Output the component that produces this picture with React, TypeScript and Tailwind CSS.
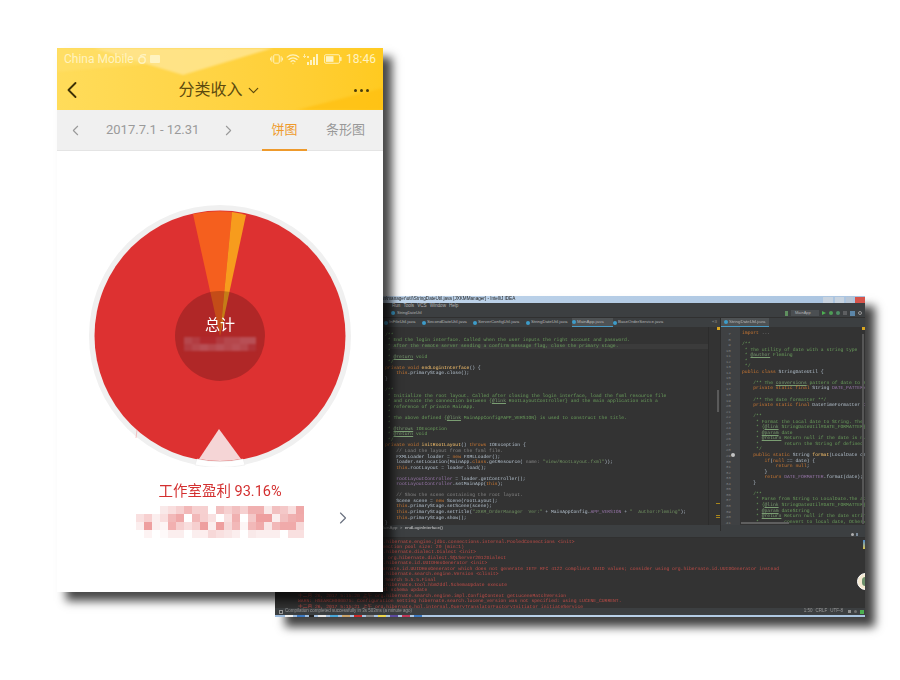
import { ChevronDown, ChevronLeft, ChevronRight, Wifi } from "lucide-react";

const sans = "font-['Roboto','Noto_Sans_CJK_SC',sans-serif]";

// syntax colours
const C = "text-[#6a9f5c]";
const D = "text-[#7a9d72] underline";
const K = "text-[#cc7832]";
const P = "text-[#b3c0cd]";
const M = "text-[#ffc66d]";
const F = "text-[#9876aa]";
const S = "text-[#6f9060]";
const G = "text-[#858585]";

type Line = [string, string][];

const leftCode: Line[] = [
  [[C, "/**"]],
  [[C, " * End the login interface. Called when the user inputs the right account and password."]],
  [[C, " * After the remote server sending a confirm message flag, close the primary stage."]],
  [[C, " *"]],
  [[C, " * "], [D, "@return"], [C, " void"]],
  [[C, " */"]],
  [[K, "private void "], [M, "endLoginInterface"], [P, "() {"]],
  [[K, "    this"], [P, ".primaryStage.close();"]],
  [[P, "}"]],
  [],
  [[C, "/**"]],
  [[C, " * Initialize the root layout. Called after closing the login interface, load the fxml resource file"]],
  [[C, " * and create the connection between {"], [D, "@link"], [C, " RootLayoutController} and the main application with a"]],
  [[C, " * reference of private MainApp."]],
  [[C, " *"]],
  [[C, " * The above defined {"], [D, "@link"], [C, " MainAppConfig#APP_VERSION} is used to construct the title."]],
  [[C, " *"]],
  [[C, " * "], [D, "@throws"], [C, " IOException"]],
  [[C, " * "], [D, "@return"], [C, " void"]],
  [[C, " */"]],
  [[K, "private void "], [M, "initRootLayout"], [P, "() "], [K, "throws "], [P, "IOException {"]],
  [[G, "    // Load the layout from the fxml file."]],
  [[P, "    FXMLLoader loader = "], [K, "new "], [P, "FXMLLoader();"]],
  [[P, "    loader.setLocation(MainApp."], [K, "class"], [P, ".getResource( "], [G, "name: "], [S, "\"view/RootLayout.fxml\""], [P, "));"]],
  [[K, "    this"], [P, ".rootLayout = loader.load();"]],
  [],
  [[F, "    rootLayoutController"], [P, " = loader.getController();"]],
  [[F, "    rootLayoutController"], [P, ".setMainApp("], [K, "this"], [P, ");"]],
  [],
  [[G, "    // Show the scene containing the root layout."]],
  [[P, "    Scene scene = "], [K, "new "], [P, "Scene(rootLayout);"]],
  [[K, "    this"], [P, ".primaryStage.setScene(scene);"]],
  [[K, "    this"], [P, ".primaryStage.setTitle("], [S, "\"JXKM_OrderManager  Ver:\""], [P, " + MainAppConfig."], [F, "APP_VERSION"], [P, " + "], [S, "\"  Author:Fleming\""], [P, ");"]],
  [[K, "    this"], [P, ".primaryStage.show();"]],
  [[P, "}"]],
];

const rightCode: Line[] = [
  [[K, "import "], [G, "..."]],
  [],
  [[C, "/**"]],
  [[C, " * The utility of date with a string type"]],
  [[C, " * "], [D, "@author"], [C, " Fleming"]],
  [[C, " *"]],
  [[C, " */"]],
  [[K, "public class "], [P, "StringDateUtil {"]],
  [],
  [[C, "    /** The "], [D, "conversions"], [C, " pattern of date to st"]],
  [[K, "    private static final "], [P, "String "], [F, "DATE_PATTERN"]],
  [],
  [[C, "    /** The date formatter **/"]],
  [[K, "    private static final "], [P, "DateTimeFormatter "], [F, "DA"]],
  [],
  [[C, "    /**"]],
  [[C, "     * Format the Local date to String. The "], [D, "p"]],
  [[C, "     * {"], [D, "@link"], [C, " StringDateUtil#DATE_FORMATTER}."]],
  [[C, "     * "], [D, "@param"], [C, " date"]],
  [[C, "     * "], [D, "@return"], [C, " Return null if the date is nul"]],
  [[C, "     *         return the String of defined"]],
  [[C, "     */"]],
  [[K, "    public static "], [P, "String "], [M, "format"], [P, "(LocalDate da"]],
  [[K, "        if"], [P, "("], [K, "null"], [P, " == date) {"]],
  [[K, "            return null"], [P, ";"]],
  [[P, "        }"]],
  [[K, "        return "], [F, "DATE_FORMATTER"], [P, ".format(date);"]],
  [[P, "    }"]],
  [],
  [[C, "    /**"]],
  [[C, "     * Parse from String to LocalDate.The abo"]],
  [[C, "     * {"], [D, "@link"], [C, " StringDateUtil#DATE_FORMATTER}."]],
  [[C, "     * "], [D, "@param"], [C, " dateString"]],
  [[C, "     * "], [D, "@return"], [C, " Return null if the date string"]],
  [[C, "     *         convert to local date, Otherw"]],
];

const consoleLines = [
  "十二月 26, 2017 5:15:19 上午 org.hibernate.engine.jdbc.connections.internal.PooledConnections <init>",
  "INFO: HHH000115: Hibernate connection pool size: 20 (min=1)",
  "十二月 26, 2017 5:15:19 上午 org.hibernate.dialect.Dialect <init>",
  "INFO: HHH000400: Using dialect: org.hibernate.dialect.SQLServer2012Dialect",
  "十二月 26, 2017 5:15:19 上午 org.hibernate.id.UUIDHexGenerator <init>",
  "WARN: HHH000409: Using org.hibernate.id.UUIDHexGenerator which does not generate IETF RFC 4122 compliant UUID values; consider using org.hibernate.id.UUIDGenerator instead",
  "十二月 26, 2017 5:15:20 上午 org.hibernate.search.engine.Version <clinit>",
  "INFO: HSEARCH000034: Hibernate Search 5.5.5.Final",
  "十二月 26, 2017 5:15:20 上午 org.hibernate.tool.hbm2ddl.SchemaUpdate execute",
  "INFO: HHH000228: Running hbm2ddl schema update",
  "十二月 26, 2017 5:15:20 上午 org.hibernate.search.engine.impl.ConfigContext getLuceneMatchVersion",
  "WARN: HSEARCH000075: Configuration setting hibernate.search.lucene_version was not specified: using LUCENE_CURRENT.",
  "十二月 26, 2017 5:15:21 上午 org.hibernate.hql.internal.QueryTranslatorFactoryInitiator initiateService",
];

const tabs = [
  { name: "InFileUtil.java", w: "w-[38px]" },
  { name: "SecondDateUtil.java", w: "w-[51px]" },
  { name: "ServerConfigUtil.java", w: "w-[53px]" },
  { name: "StringDateUtil.java", w: "w-[46px]" },
  { name: "MainApp.java", w: "w-[41px]", active: true },
  { name: "BaseOrderService.java", w: "w-[58px]" },
];

const rowA = "#ffffff #ffffff #ffffff #f9e9e9 #f9dede #f6d0d0 #f2b8b8 #f6d0d0 #f6d0d0 #ffffff #f2c0c0 #f6d0d0 #f2c0c0 #f6d0d0 #f0b0b0 #f0b0b0 #f9e9e9 #f2c0c0 #f4c8c8 #f9dede #efa8a8";
const rowB = "#f9e0e0 #f7d0d0 #fbeeee #f9dede #f2b8b8 #efa8a8 #ffffff #f2b8b8 #f6cfcf #f9e0e0 #ffffff #f9e0e0 #f0b0b0 #ffffff #f4c8c8 #ee9f9f #ee9f9f #fbeeee #f2c0c0 #f0b0b0 #f0aaaa";
const rowC = "#fbeeee #ee9f9f #fbeeee #fdf5f5 #f2b0b0 #f6cfcf #f9dede #f6cfcf #ee9f9f #fbeeee #ee9f9f #f6d8d8 #f2b8b8 #fdf5f5 #f2b8b8 #f0aaaa #f9e6e6 #f2b8b8 #f0aaaa #f0aaaa #f7d8d8";
const rowD = "#ffffff #fdf3f3 #ffffff #fef9f9 #fbeeee #fbeeee #ffffff #fbeeee #fdeeee #f7d8d8 #f9e0e0 #f9e6e6 #fbeeee #ffffff #f9e9e9 #fbeeee #fbeeee #fbeeee #ffffff #f9e0e0 #f9e0e0";
const mosaic = [rowA, rowB, rowC, rowD].map((r) => r.split(" "));

const centerMosaic = [
  "#b5474c #b23c41 #b02a2e #b02a2e #b23a3f #b5474c #b5474c #b84f55 #b84f55",
  "#b23c41 #b5474c #b84f55 #b5474c #b84f55 #b5474c #b84f55 #b5474c #b03338",
].map((r) => r.split(" "));

function Code({ lines, highlight }: { lines: Line[]; highlight?: number }) {
  return (
    <div className="font-['Liberation_Mono','Noto_Sans_CJK_SC',monospace] text-[4.7px] leading-[5.55px] whitespace-pre [text-rendering:geometricPrecision]">
      {lines.map((line, i) => (
        <div key={i} className={i === highlight ? "h-[5.55px] bg-[#3b3b3b]" : "h-[5.55px]"}>
          {line.map(([cls, text], j) => (
            <span key={j} className={cls}>{text}</span>
          ))}
        </div>
      ))}
    </div>
  );
}

function StatusIcons() {
  return (
    <div className="flex items-center gap-[3px]">
      {/* vibrate */}
      <svg width="13" height="10" viewBox="0 0 14 10" fill="none" stroke="#fff3c0" strokeWidth="1">
        <rect x="4" y="0.5" width="6" height="9" rx="1" />
        <path d="M2 2v6M0.5 3.5v3M12 2v6M13.5 3.5v3" />
      </svg>
      <Wifi className="w-[14px] h-[14px] text-[#fff3c0]" strokeWidth={2} />
      {/* signal */}
      <svg width="16" height="11" viewBox="0 0 16 11" fill="#fff3c0">
        <path d="M0 2h3v1H0zM1 0h1v4H1zM4 2h2v2H4z" opacity="0.8" />
        <rect x="4" y="8" width="2" height="3" />
        <rect x="7" y="6" width="2" height="5" />
        <rect x="10" y="3" width="2" height="8" />
        <rect x="13" y="0" width="2" height="11" />
      </svg>
      {/* battery */}
      <svg width="18" height="10" viewBox="0 0 19 10" className="ml-[2px]">
        <rect x="0.5" y="0.5" width="16" height="9" rx="1.5" fill="none" stroke="#fff3c0" />
        <rect x="2" y="2" width="8" height="6" fill="#fff3c0" />
        <rect x="17" y="3" width="1.5" height="4" fill="#fff3c0" />
      </svg>
    </div>
  );
}

function Pie() {
  return (
    <div className="relative w-[262px] h-[262px] mx-auto">
      <svg width="262" height="262" viewBox="0 0 262 262">
        <circle cx="131" cy="131" r="131" fill="#f0f0f0" />
        <circle cx="131" cy="131" r="125.5" fill="#dd3131" />
        <path d="M131 131 L104 9 A125 125 0 0 1 143 7 Z" fill="#f55f1e" />
        <path d="M131 131 L143 7 A125 125 0 0 1 157 10 Z" fill="#f79c1d" />
        <circle cx="131" cy="131" r="45" fill="#000" fillOpacity="0.2" />
        <path d="M130 224 L110 254 Q131 258 152 254 Z" fill="#f5d5d6" />
        <path d="M108 254 Q131 259 154 254 L156 260 Q131 265 106 260 Z" fill="#fff" stroke="#e6e6e6" strokeWidth="0.5" />
        <path d="M48 225 L47 233" stroke="#f0a0a0" strokeWidth="0.6" />
        <g className="blur-[0.8px]">
          {centerMosaic.map((row, y) =>
            row.map((fill, x) => (
              <rect key={`${x}-${y}`} x={95 + x * 8} y={132 + y * 7} width="8" height="7" fill={fill} />
            ))
          )}
        </g>
      </svg>
      <div className={`absolute left-0 right-0 top-[111px] text-center text-[15px] leading-[18px] text-white ${sans}`}>总计</div>
    </div>
  );
}

function Phone() {
  return (
    <div className={`absolute left-[57px] top-[48px] z-10 w-[326px] h-[544px] bg-white shadow-[9px_9px_9px_rgba(0,0,0,0.72)] ${sans}`}>
      {/* yellow header */}
      <div className="relative h-[62px] overflow-hidden bg-gradient-to-r from-[#ffdc5a] to-[#ffca20]">
        <svg className="absolute inset-0 blur-[1px]" width="326" height="62" viewBox="0 0 326 62">
          <path d="M36 0 L126 27 L216 0 Z" fill="#ffe590" fillOpacity="0.85" />
          <path d="M0 0 L36 0 L90 16 L0 24 Z" fill="#ffe06c" fillOpacity="0.6" />
          <path d="M326 40 L326 62 L240 62 Z" fill="#ffbf10" fillOpacity="0.7" />
        </svg>
        <div className="relative flex items-center justify-between h-[22px] pl-[7px] pr-[7px] text-[12px] text-[#fff3c0]">
          <div className="flex items-center gap-[3px]">
            <span>China Mobile</span>
            <svg width="10" height="10" viewBox="0 0 10 10" fill="none" stroke="#fff3c0" strokeWidth="1.4">
              <circle cx="5" cy="6" r="3.2" />
              <path d="M3 2 Q6 0 9 1" />
            </svg>
            <span className="w-[10px] h-[8px] bg-[#fff3c0] rounded-[1px]" />
          </div>
          <div className="flex items-center gap-[4px]">
            <StatusIcons />
            <span>18:46</span>
          </div>
        </div>
        <div className="relative flex items-center justify-between h-[40px] pl-[1px] pr-[14px] text-[#5c4a0e]">
          <ChevronLeft className="w-[28px] h-[28px] text-[#3d3106]" strokeWidth={1.6} />
          <div className="flex items-center gap-[2px] text-[16px]">
            <span>分类收入</span>
            <ChevronDown className="w-[17px] h-[17px]" strokeWidth={1.7} />
          </div>
          <div className="flex gap-[3px]">
            <span className="w-[3px] h-[3px] rounded-full bg-[#4a3b0a]" />
            <span className="w-[3px] h-[3px] rounded-full bg-[#4a3b0a]" />
            <span className="w-[3px] h-[3px] rounded-full bg-[#4a3b0a]" />
          </div>
        </div>
      </div>

      {/* date row */}
      <div className="flex items-center h-[41px] bg-[#f0f0f0] border-b border-[#e4e4e4] text-[13px] text-[#999999]">
        <ChevronLeft className="ml-[10px] w-[17px] h-[17px]" strokeWidth={1.5} />
        <span className="ml-[22px] w-[93px] whitespace-nowrap text-[#9a9a9a]">2017.7.1 - 12.31</span>
        <ChevronRight className="ml-[21px] w-[17px] h-[17px]" strokeWidth={1.5} />
        <div className="ml-[25px] relative w-[45px] h-full flex items-center justify-center text-[#ee9a2c]">
          饼图
          <span className="absolute left-0 right-0 bottom-[-1px] h-[2px] bg-[#ee9a2c]" />
        </div>
        <span className="ml-[19px]">条形图</span>
      </div>

      <div className="pt-[54px]">
        <Pie />
      </div>

      <div className="relative mt-[16px] text-center">
        <div className="text-[14.5px] leading-[18px] text-[#d32f2f]">工作室盈利 93.16%</div>
        <svg width="168" height="32" viewBox="0 0 168 32" className="mx-auto mt-[5px] blur-[0.5px]">
          {mosaic.map((row, y) =>
            row.map((fill, x) => (
              <rect key={`${x}-${y}`} x={x * 8} y={y * 8} width="8" height="8" fill={fill} />
            ))
          )}
        </svg>
        <ChevronRight className="absolute left-[276px] top-[25px] w-[20px] h-[20px] text-[#6b7280]" strokeWidth={1.4} />
      </div>
    </div>
  );
}

function Ide() {
  return (
    <div className="absolute left-[275px] top-[296px] w-[590px] h-[321px] flex flex-col overflow-visible bg-[#333333] shadow-[10px_10px_9px_rgba(0,0,0,0.75)]">
      <div className="flex flex-col h-full overflow-hidden blur-[0.4px]">
        {/* title bar */}
        <div className="relative h-[7px] shrink-0 flex items-center justify-between pl-[98px] bg-gradient-to-r from-[#c5d9ee] to-[#aac4e0] font-['Liberation_Sans',sans-serif] text-[4.6px] text-[#222222] whitespace-pre">
          <span>erman\manager\util\StringDateUtil.java [JXKMManager] - IntelliJ IDEA</span>
          <div className="flex gap-[2px] h-[6px]">
            <span className="w-[10px] bg-[#c8d3df]" />
            <span className="w-[9px] bg-[#c8d3df]" />
            <span className="w-[7px] bg-[#b8c6d6]" />
            <span className="w-[10px] bg-[#d6534a]" />
          </div>
        </div>
        {/* menu */}
        <div className="h-[6px] shrink-0 flex items-center gap-[3px] pl-[117px] bg-[#3c3f41] font-['Liberation_Sans',sans-serif] text-[4.6px] text-[#b4b4b4] whitespace-pre">
          <span>Run</span><span>Tools</span><span>VCS</span><span>Window</span><span>Help</span>
        </div>
        {/* navigation and toolbar */}
        <div className="h-[9px] shrink-0 flex items-center pl-[116px] pr-[3px] bg-[#3c3f41] border-b border-[#303030] font-['Liberation_Sans',sans-serif] text-[4px] text-[#b4b4b4]">
          <span className="w-[4px] h-[4px] rounded-full bg-[#3d9cc9] mr-[2px]" />
          <span>StringDateUtil</span>
          <div className="ml-auto flex items-center gap-[3px]">
            <span className="w-[3px] h-[5px] bg-[#5f8f5f]" />
            <span className="w-[28px] h-[6px] bg-[#4b4f52] pl-[4px] leading-[6px]">MainApp</span>
            <span className="w-0 h-0 border-y-[2.5px] border-y-transparent border-l-[4px] border-l-[#4caf50]" />
            <span className="w-[4px] h-[4px] rounded-full bg-[#4f9e55]" />
            <span className="w-[4px] h-[4px] rounded-full bg-[#4f8f65]" />
            <span className="w-[4px] h-[4px] bg-[#5d5f61]" />
            <span className="w-[5px] h-[5px] bg-[#5c86a8]" />
            <span className="w-[4px] h-[4px] rounded-full border border-[#9a9a9a]" />
          </div>
        </div>

        {/* editors */}
        <div className="flex shrink-0 h-[213px]">
          <div className="w-[445px] flex flex-col">
            <div className="h-[9px] flex items-center pl-[109px] bg-[#3c3f41] font-['Liberation_Sans',sans-serif] text-[4.4px] text-[#b4b4b4] whitespace-nowrap overflow-hidden">
              {tabs.map((tab) => (
                <div
                  key={tab.name}
                  className={
                    tab.active
                      ? `${tab.w} h-full flex items-center gap-[1px] shrink-0 bg-[#4e5254] border-b border-[#4a9ac4]`
                      : `${tab.w} h-full flex items-center gap-[1px] shrink-0`
                  }
                >
                  <span className="w-[4px] h-[4px] rounded-full bg-[#3d9cc9] shrink-0" />
                  {tab.name}
                </div>
              ))}
              <span className="ml-auto mr-[3px] text-[#8a8a8a]">«3</span>
            </div>
            <div className="relative flex h-[198px] overflow-hidden">
              <div className="w-[433px] pt-[5.5px] pl-[110px] overflow-hidden">
                <Code lines={leftCode} highlight={2} />
              </div>
              <div className="relative w-[12px] border-l border-[#2c2c2c]">
                <span className="absolute right-0 top-0 w-[3px] h-[3px] bg-[#d8a520]" />
                <span className="absolute right-[1px] top-[63px] w-[2px] h-[22px] bg-[#5a5a5a]" />
                <span className="absolute right-0 top-[176px] w-[4px] h-[1px] bg-[#a8861c]" />
                <span className="absolute right-0 top-[188px] w-[4px] h-[1px] bg-[#a8861c]" />
                <span className="absolute right-0 top-[190px] w-[4px] h-[1px] bg-[#a8861c]" />
              </div>
            </div>
            <div className="h-[6px] flex items-center pl-[105px] bg-[#3c3f41] font-['Liberation_Sans',sans-serif] text-[4.4px] text-[#a0a0a0] whitespace-pre">
              MainApp  &gt;  <span className="text-[#cfcfcf]">endLoginInterface()</span>
            </div>
          </div>
          <div className="w-[145px] flex flex-col border-l border-[#2c2c2c]">
            <div className="h-[9px] flex bg-[#3c3f41]">
              <div className="w-[48px] h-full flex items-center gap-[1px] pl-[3px] bg-[#4e5254] border-b border-[#4a9ac4] font-['Liberation_Sans',sans-serif] text-[4.4px] text-[#b4b4b4] whitespace-nowrap">
                <span className="w-[4px] h-[4px] rounded-full bg-[#3d9cc9] shrink-0" />
                StringDateUtil.java
              </div>
            </div>
            <div className="relative flex h-[198px] overflow-hidden">
              <div className="w-[19px] shrink-0 pt-[4px] pr-[9px] bg-[#3f4143] text-right font-['Liberation_Mono',monospace] text-[4.4px] leading-[5.55px] text-[#7c7c7c]">
                {rightCode.map((_, i) => (
                  <div key={i} className="h-[5.55px]">{i + 7}</div>
                ))}
              </div>
              <div className="flex-1 pt-[4px] pl-[2px] overflow-hidden">
                <Code lines={rightCode} />
              </div>
              <span className="absolute right-0 top-0 w-[3px] h-[3px] bg-[#d8a520]" />
              <span className="absolute right-[1px] top-[7px] w-[2px] h-[190px] bg-[#565656]" />
              <span className="absolute left-[20px] bottom-[1px] w-[48px] h-[2px] bg-[#5f5f5f]" />
              <span className="absolute left-[10px] top-[126px] w-[4px] h-[4px] rounded-full bg-[#c4c4c4]" />
            </div>
            <div className="h-[6px] bg-[#3c3f41]" />
          </div>
        </div>

        {/* run tool window */}
        <div className="relative h-[7px] shrink-0 bg-[#3c3f41] border-b border-[#303030]">
          <span className="absolute right-[11px] top-[2px] w-[3px] h-[3px] rounded-full bg-[#b0b0b0]" />
          <span className="absolute right-[7px] top-[2px] w-[2px] h-[3px] bg-[#7a8a99]" />
        </div>
        <div className="relative h-[70px] shrink-0 bg-[#333333] pl-[23px] overflow-hidden">
          <div className="pt-[1.5px] font-['Liberation_Mono','Noto_Sans_CJK_SC',monospace] text-[4.7px] leading-[5.45px] whitespace-pre text-[#c04c47] [text-rendering:geometricPrecision]">
            {consoleLines.map((line) => (
              <div key={line} className="h-[5.45px]">{line}</div>
            ))}
          </div>
          <span className="absolute right-0 top-[2px] w-[2px] h-[9px] bg-gradient-to-b from-[#4a86c8] to-[#d8c23e]" />
          {/* avatar sitting on the window edge */}
          <div className="absolute right-[-9px] top-[35px] w-[17px] h-[17px] rounded-full bg-[#f5ead2] border border-white flex items-center justify-center">
            <span className="w-[7px] h-[9px] rounded-full bg-[#6c8f6a]" />
          </div>
        </div>
        {/* status bar */}
        <div className="h-[7px] shrink-0 flex items-center pl-[4px] pr-[1px] bg-[#3c3f41] font-['Liberation_Sans',sans-serif] text-[4.5px] text-[#9a9a9a] whitespace-pre">
          <span className="w-[4px] h-[4px] border border-[#9a9a9a] mr-[2px]" />
          <span>Compilation completed successfully in 3s 503ms (a minute ago)</span>
          <div className="ml-auto flex items-center gap-[3px]">
            <span>1:50</span><span>CRLF</span><span>UTF-8</span>
            <span className="ml-[2px] w-[3px] h-[3px] bg-[#8f8f8f]" />
            <span className="w-[3px] h-[3px] rounded-full bg-[#6f6f6f]" />
            <span className="w-[4px] h-[4px] bg-[#4caf50]" />
          </div>
        </div>
        {/* windows task bar */}
        <div className="h-[2px] shrink-0 flex gap-[4px] pl-[10px] bg-gradient-to-r from-[#9ebbdc] via-[#bcd3ea] to-[#a9c4e0]">
          <span className="w-[8px] bg-[#f2f2f2]" />
          <span className="w-[8px] bg-[#3c78c0]" />
          <span className="w-[5px] bg-[#222222]" />
          <span className="w-[8px] bg-[#e8e8e8]" />
          <span className="w-[8px] bg-[#48a6d8]" />
          <span className="w-[8px] bg-[#c9a26a]" />
          <span className="w-[8px] bg-[#cc2b2b]" />
          <span className="w-[8px] bg-[#888888]" />
          <span className="w-[8px] bg-[#ecd54a]" />
          <span className="w-[8px] bg-[#5c4a9e]" />
          <span className="w-[8px] bg-[#c0395a]" />
          <span className="w-[8px] bg-[#3c78c0]" />
        </div>
      </div>
    </div>
  );
}

export default function App() {
  return (
    <div className="relative w-[900px] h-[680px] overflow-hidden bg-white">
      <Ide />
      <Phone />
    </div>
  );
}
